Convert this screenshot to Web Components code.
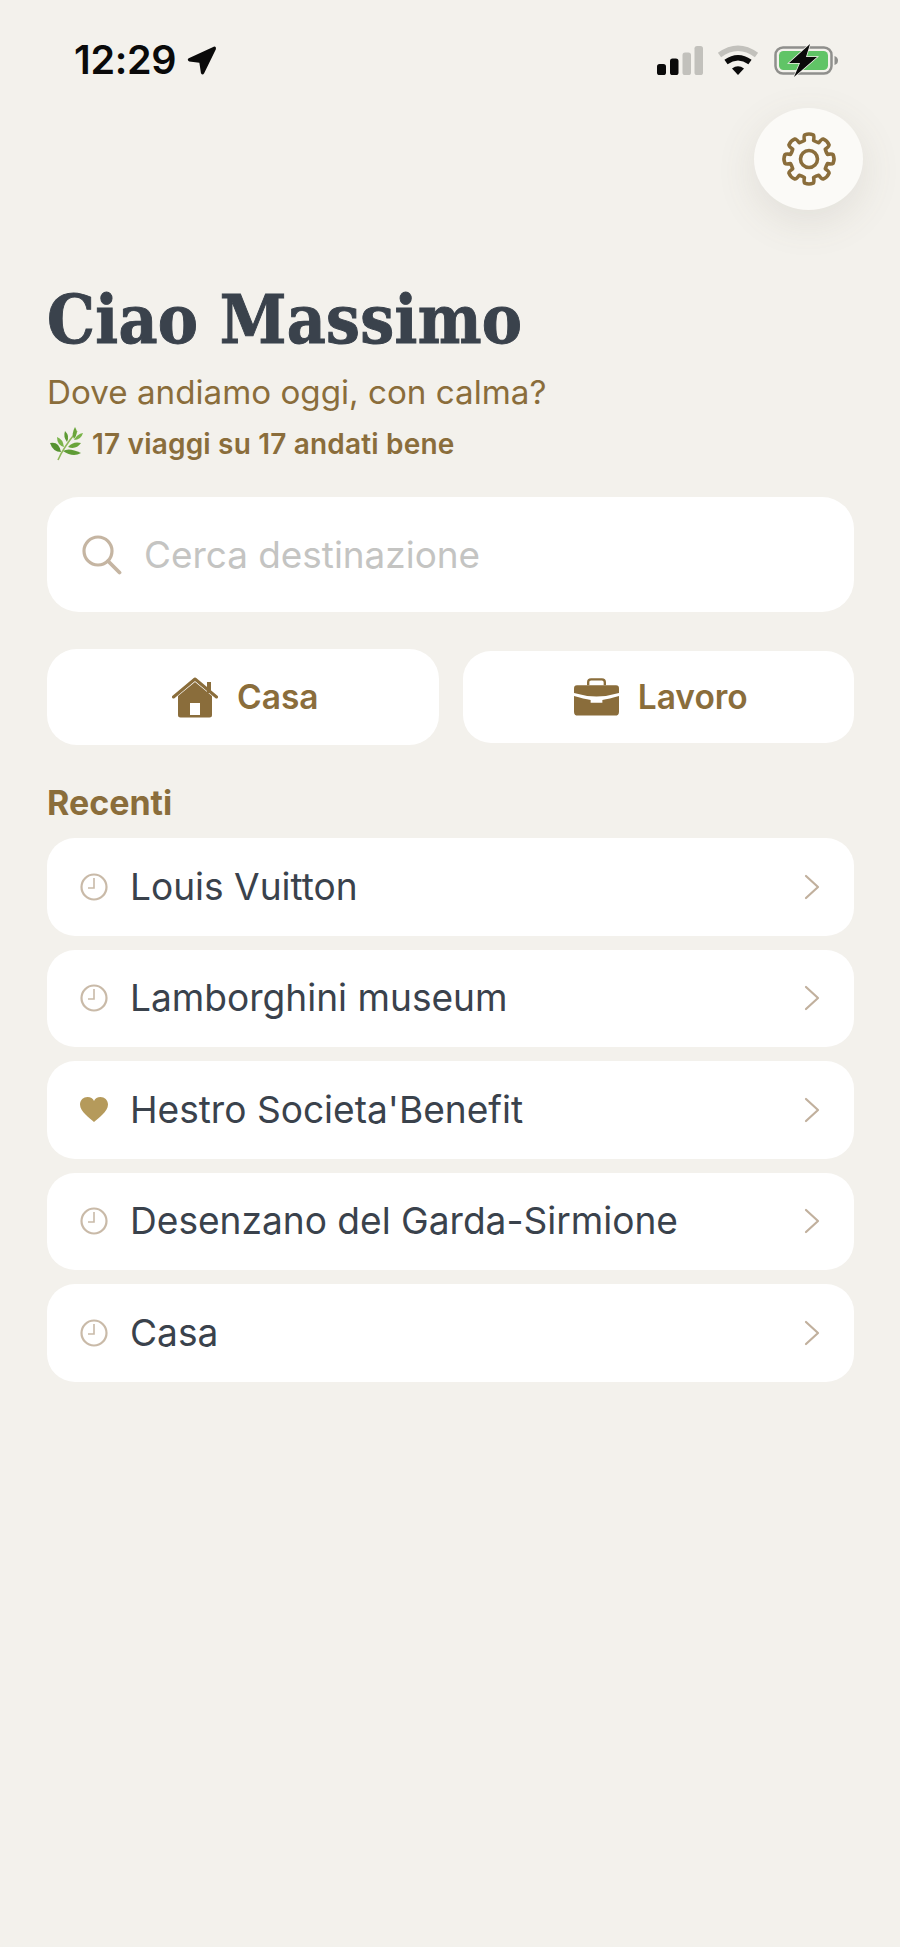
<!doctype html>
<html><head><meta charset="utf-8">
<style>
html,body{margin:0;padding:0;background:#f3f1ec;}
body{width:900px;height:1947px;overflow:hidden;font-family:Inter,"Liberation Sans",sans-serif;}
</style></head><body>
<app-screen>
  <status-bar></status-bar>
  <settings-button></settings-button>
  <greeting-block name="Ciao Massimo" sub="Dove andiamo oggi, con calma?" stat="17 viaggi su 17 andati bene"></greeting-block>
  <search-box placeholder="Cerca destinazione"></search-box>
  <quick-actions></quick-actions>
  <section-label>Recenti</section-label>
  <recent-item icon="clock">Louis Vuitton</recent-item>
  <recent-item icon="clock">Lamborghini museum</recent-item>
  <recent-item icon="heart">Hestro Societa'Benefit</recent-item>
  <recent-item icon="clock">Desenzano del Garda-Sirmione</recent-item>
  <recent-item icon="clock">Casa</recent-item>
</app-screen>
<script>
function def(name, css, html){
  customElements.define(name, class extends HTMLElement{
    connectedCallback(){
      if(this.shadowRoot) return;
      const r=this.attachShadow({mode:'open'});
      const get=k=>this.getAttribute(k)||'';
      r.innerHTML='<style>'+css+'</style>'+(typeof html==='function'?html(get):html);
    }
  });
}
const BROWN='#8a6d3b';
function gearPath(cx,cy,ro,ri,n){
  const p=(r,d)=>{const a=(d-90)*Math.PI/180;return (cx+r*Math.cos(a)).toFixed(2)+' '+(cy+r*Math.sin(a)).toFixed(2)};
  const s=360/n;let d='';
  for(let i=0;i<n;i++){
    const a=i*s;
    d+=(i?'':'M'+p(ri,a-14))+' Q'+p(ro*.95,a-13)+' '+p(ro*.98,a-10)+' Q'+p(ro*1.04,a)+' '+p(ro*.98,a+10)+' Q'+p(ro*.95,a+13)+' '+p(ri,a+14);
    d+=' Q'+p(ri*.97,a+s/2)+' '+p(ri,a+s-14);
  }
  return d+'Z';
}
def('app-screen',':host{display:flex;flex-direction:column;padding:0 46px 0 47px;width:807px;height:1947px}','<slot></slot>');

def('status-bar',`:host{display:flex;align-items:flex-start;justify-content:space-between;height:108px;margin:0 14px 0 0}
.l{display:flex;align-items:center;gap:9px;margin:40px 0 0 27px;font:600 39.500px/40px Inter,sans-serif;color:#0a0a0a;letter-spacing:-.3px}
.r{display:flex;align-items:flex-start;margin-top:44px}
svg{display:block}`,
`<div class="l"><span>12:29</span><svg width="33" height="33" viewBox="0 0 31 31"><path d="M27 2.500 L3.500 13.500 Q1.500 15 4 16.500 L13.500 17.500 L15 27.500 Q16.500 30 18 27.500 L29 5 Q29.500 2 27 2.500Z" fill="#0a0a0a"/></svg></div>
<div class="r">
<svg width="183" height="33" viewBox="0 0 183 33">
<g transform="translate(0 1)">
<rect x="0" y="19" width="9" height="11" rx="2.600" fill="#0a0a0a"/>
<rect x="13" y="13.500" width="8.500" height="16.500" rx="2.600" fill="#0a0a0a"/>
<rect x="25.500" y="7.500" width="8.500" height="22.500" rx="2.600" fill="#c2c1bc"/>
<rect x="37.500" y="1" width="8.500" height="29" rx="2.600" fill="#c2c1bc"/>
</g>
<g transform="translate(61 1)" fill="none">
<path d="M1.500 10 Q20 -3.500 38.500 10" stroke="#c2c1bc" stroke-width="5.500"/>
<path d="M8 17 Q20 8.500 32 17" stroke="#0a0a0a" stroke-width="5.500"/>
<path d="M14 23.500 L20 30 L26 23.500 Q20 19 14 23.500Z" fill="#0a0a0a"/>
</g>
<g transform="translate(117 1)">
<rect x="1.500" y="2.500" width="56" height="26" rx="7.500" fill="none" stroke="#8f8f8c" stroke-width="2.500"/>
<rect x="5" y="6" width="49" height="19" rx="4.500" fill="#60c466"/>
<path d="M60.500 11 Q64 12 64 15.500 Q64 19 60.500 20Z" fill="#8f8f8c"/>
<path d="M36 -1 L15 18 L26 18 L20 32 L43 12 L32 12Z" fill="#0a0a0a" stroke="#f3f1ec" stroke-width="1.500" paint-order="stroke"/>
</g>
</svg></div>`);

def('settings-button',`:host{display:flex;align-self:flex-end;align-items:center;justify-content:center;width:109px;height:102px;margin-right:-9px;border-radius:50%;background:#fbfaf7;box-shadow:0 12px 40px rgba(110,100,80,.12)}`,
`<svg width="56" height="56" viewBox="0 0 56 56" fill="none" stroke="${BROWN}" stroke-width="3.600" stroke-linejoin="round"><path d="${gearPath(28,28,25,19,8)}"/><circle cx="28" cy="28" r="8.500"/></svg>`);

def('greeting-block',`:host{display:block;margin-top:64px}
h1{margin:0;font:700 67px/92px "DejaVu Serif",serif;font-stretch:condensed;color:#3a424c;letter-spacing:.3px;-webkit-text-stroke:.9px #3a424c}
.s{font:400 33.200px/44px Inter,sans-serif;color:${BROWN};margin-top:4px}
.t{display:flex;align-items:center;gap:9px;font:600 28px/36px Inter,sans-serif;color:${BROWN};margin-top:12px;letter-spacing:.18px;padding-left:2px}
svg{display:block;flex:none}`,
g=>`<h1>${g('name')}</h1><div class="s">${g('sub')}</div><div class="t"><svg width="34" height="36" viewBox="0 0 34 36">
<path d="M9 34 Q14 22 28 5" fill="none" stroke="#8fb85a" stroke-width="1.600"/>
<path d="M25 13 Q22 8 26 1 Q30 7 25 13Z" fill="#6aa53a"/>
<path d="M18 16 Q14 11 16 5 Q21 10 18 16Z" fill="#5d9a33"/>
<path d="M25 14 Q28 8 34 7 Q32 14 25 14Z" fill="#78b347"/>
<path d="M19 21 Q24 15 32 17 Q27 24 19 21Z" fill="#6aa53a"/>
<path d="M12 26 Q4 26 1 17 Q10 15 12 26Z" fill="#55922f"/>
<path d="M14 25 Q20 21 32 27 Q24 32 14 25Z" fill="#5f9c36"/>
<path d="M15 21 Q8 19 8 11 Q14 13 15 21Z" fill="#7ab44a"/>
</svg><span>${g('stat')}</span></div>`);

def('search-box',`:host{display:flex;align-items:center;box-sizing:border-box;height:115px;margin-top:35px;padding-left:35px;background:#fff;border-radius:32px;font:400 36.900px/44px Inter,sans-serif;color:#c4c4c2}
svg{display:block;margin-right:22px;flex:none}`,
g=>`<svg width="40" height="40" viewBox="0 0 40 40" fill="none" stroke="#c5b5a2" stroke-width="3.200" stroke-linecap="round"><circle cx="16" cy="16" r="14"/><path d="M26 26 L37.500 37.500" stroke-width="3.800"/></svg><span>${g('placeholder')}</span>`);

def('quick-actions',`:host{display:flex;align-items:center;gap:24px;margin-top:37px;height:96px}
action-button{flex:1}`,
`<action-button tall label="Casa" icon="home"></action-button><action-button label="Lavoro" icon="work"></action-button>`);

const ICONS={
home:`<svg width="46" height="41" viewBox="0 0 46 41"><path d="M6 19 L23 5 L40 19 V38 Q40 40.500 37.500 40.500 H8.500 Q6 40.500 6 38Z M18 38 H28 V26 H18Z" fill="${BROWN}" fill-rule="evenodd"/><path d="M1.500 20 L23 2 L44.500 20" fill="none" stroke="${BROWN}" stroke-width="3" stroke-linecap="round" stroke-linejoin="round"/><rect x="35" y="5" width="4" height="11" fill="${BROWN}"/></svg>`,
work:`<svg width="45" height="38" viewBox="0 0 46 38"><path d="M14.500 7 V4 Q14.500 1 17.500 1 H28.500 Q31.500 1 31.500 4 V7" fill="none" stroke="${BROWN}" stroke-width="2.400"/><path d="M0 10 Q0 7 3 7 H43 Q46 7 46 10 V15 Q23 22 0 15Z" fill="${BROWN}"/><path d="M0 18 Q10 21 17 22 V25 H29 V22 Q36 21 46 18 V34 Q46 38 42 38 H4 Q0 38 0 34Z" fill="${BROWN}"/></svg>`
};
def('action-button',`:host{display:flex;align-items:center;justify-content:center;box-sizing:border-box;height:92px;padding-left:5px;background:#fff;border-radius:28px;font:600 33.500px/40px Inter,sans-serif;color:${BROWN};gap:19px}
:host([tall]){height:96px;border-radius:30px}
svg{display:block;flex:none}`,
g=>ICONS[g('icon')]+`<span>${g('label')}</span>`);

def('section-label',`:host{display:block;margin:38px 0 15px;font:700 34px/40px Inter,sans-serif;color:${BROWN}}`,'<slot></slot>');

const RI={
clock:`<svg width="28" height="28" viewBox="0 0 28 28" fill="none" stroke="#c9baa8" stroke-width="2.200"><circle cx="14" cy="14" r="12.500"/><path d="M14 5 V15 H8" stroke-width="1.600"/></svg>`,
heart:`<svg width="28" height="26" viewBox="0 0 28 26"><path d="M14 25 C10 21 0 15 0 7.500 C0 3 3.500 0 7.500 0 C10.500 0 13 1.500 14 4 C15 1.500 17.500 0 20.500 0 C24.500 0 28 3 28 7.500 C28 15 18 21 14 25Z" fill="#b59a5b"/></svg>`};
def('recent-item',`:host{display:flex;align-items:center;box-sizing:border-box;height:97.500px;margin-bottom:14px;padding:0 34px 0 33px;background:#fff;border-radius:28px;font:400 37.100px/44px Inter,sans-serif;color:#3a424c}
.i{width:28px;display:flex;justify-content:center;margin-right:22px;flex:none}
.t{flex:1}
svg{display:block}`,
g=>`<span class="i">${RI[g('icon')]}</span><span class="t"><slot></slot></span><svg width="16" height="26" viewBox="0 0 16 26" fill="none" stroke="#c1b09d" stroke-width="2.200" stroke-linecap="round" stroke-linejoin="round"><path d="M2 2 L14 13 L2 24"/></svg>`);
</script>
</body></html>
